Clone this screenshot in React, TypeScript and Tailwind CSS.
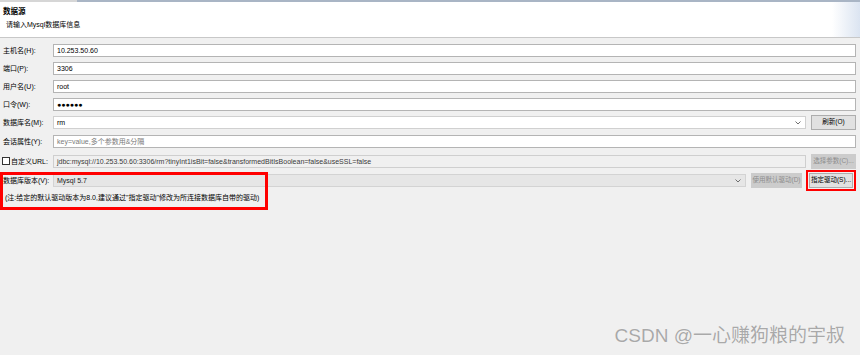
import React from 'react';

const font = "font-['Liberation_Sans','Noto_Sans_CJK_SC',sans-serif]";

function Chevron() {
  return (
    <svg width="6" height="4" viewBox="0 0 6 4" className="shrink-0">
      <polyline points="0.5,0.5 3,3 5.5,0.5" fill="none" stroke="#606060" strokeWidth="0.9" />
    </svg>
  );
}

function Field({ children, muted = false }: { children?: React.ReactNode; muted?: boolean }) {
  return (
    <div
      className={`flex-1 h-[13px] flex items-center px-[3px] border text-[7px] leading-none whitespace-nowrap ${
        muted ? 'bg-[#f0f0f0] border-[#cfcfcf] text-[#3a3a3a]' : 'bg-white border-[#b4b4b4] text-black'
      }`}
    >
      {children}
    </div>
  );
}

function Button({ label, disabled = false, w }: { label: string; disabled?: boolean; w: string }) {
  return (
    <div
      className={`${w} h-[15px] shrink-0 flex items-center justify-center border text-[6.5px] leading-none whitespace-nowrap overflow-hidden ${
        disabled
          ? 'bg-[#cccccc] border-[#cccccc] text-[#8c8c8c]'
          : 'bg-[#e1e1e1] border-[#adadad] text-black'
      }`}
    >
      {label}
    </div>
  );
}

function Row({ label, children, h = 'h-[18px]' }: { label: React.ReactNode; children: React.ReactNode; h?: string }) {
  return (
    <div className={`flex items-center ${h}`}>
      <div className="w-[50px] shrink-0 text-[7px] leading-none text-black flex items-center whitespace-nowrap">{label}</div>
      {children}
    </div>
  );
}

export default function App() {
  return (
    <div className={`${font} w-[860px] h-[355px] bg-[#f0f0f0] flex flex-col relative overflow-hidden`}>
      {/* window edge */}
      <div className="flex h-[2px]">
        <div className="w-[77px] bg-[#d6d6d6]" />
        <div className="flex-1 bg-[#a9b5c5]" />
      </div>

      {/* header */}
      <div className="h-[36px] bg-white border-b border-[#c8c8c8] flex">
        <div className="flex-1 pt-[5px]">
          <div className="pl-[3px] text-[7.5px] leading-[10px] font-bold text-black">数据源</div>
          <div className="pl-[6px] mt-[3px] text-[7px] leading-[10px] text-black">请输入Mysql数据库信息</div>
        </div>
        <div className="w-[28px] bg-linear-to-r from-white to-[#dbe4f1]" />
      </div>

      {/* form */}
      <div className="pt-[3px] pl-[3px] pr-[4px] flex flex-col">
        <Row label="主机名(H):">
          <Field>10.253.50.60</Field>
        </Row>
        <Row label="端口(P):">
          <Field>3306</Field>
        </Row>
        <Row label="用户名(U):">
          <Field>root</Field>
        </Row>
        <Row label="口令(W):">
          <Field>
            <span className="text-[7px] font-bold">●●●●●●</span>
          </Field>
        </Row>
        <Row label="数据库名(M):" h="h-[19px]">
          <div className="flex-1 h-[13px] flex items-center justify-between px-[3px] pr-[4px] bg-white border border-[#d0d0d0] text-[7px] leading-none">
            <span>rm</span>
            <Chevron />
          </div>
          <div className="w-[5px]" />
          <Button label="刷新(O)" w="w-[45px]" />
        </Row>
        <Row label="会话属性(Y):" h="h-[19px]">
          <Field>
            <span className="text-[#7a7a7a]">key=value,多个参数用&amp;分隔</span>
          </Field>
        </Row>
        <Row
          h="h-[20px]"
          label={
            <span className="flex items-center gap-[1px] -ml-[1px]">
              <span className="w-[8px] h-[8px] border border-[#333] bg-white" />
              自定义URL:
            </span>
          }
        >
          <Field muted>jdbc:mysql://10.253.50.60:3306/rm?tinyInt1isBit=false&amp;transformedBitIsBoolean=false&amp;useSSL=false</Field>
          <div className="w-[5px]" />
          <Button label="选择参数(C)..." disabled w="w-[45px]" />
        </Row>
        <Row label="数据库版本(V):" h="h-[19px]">
          <div className="flex-1 h-[13px] flex items-center justify-between px-[3px] pr-[4px] bg-[#e6e6e6] border border-[#d3d3d3] text-[7px] leading-none text-[#1a1a1a]">
            <span>Mysql 5.7</span>
            <Chevron />
          </div>
          <div className="w-[5px]" />
          <Button label="使用默认驱动(D)" disabled w="w-[51px]" />
          <div className="w-[3px]" />
          <div className="border-[2px] border-[#ff0000] p-[1px] ml-[1px] shrink-0">
            <Button label="指定驱动(S)..." w="w-[44px]" />
          </div>
        </Row>
        <div className="mt-[2px] pl-[2px] text-[7px] leading-[12px] text-black whitespace-nowrap">
          (注:给定的默认驱动版本为8.0,建议通过"指定驱动"修改为所连接数据库自带的驱动)
        </div>
      </div>

      {/* annotation box */}
      <div className="absolute left-0 top-[172px] w-[268px] h-[38px] border-[3px] border-[#ff0000]" />

      {/* watermark */}
      <div className="flex-1 flex items-end justify-end pr-[15px] pb-[8px]">
        <span className="text-[19px] leading-[22px] text-[#a9a9a9] [text-shadow:0_0_1px_#ffffff]">
          CSDN @一心赚狗粮的宇叔
        </span>
      </div>
    </div>
  );
}
